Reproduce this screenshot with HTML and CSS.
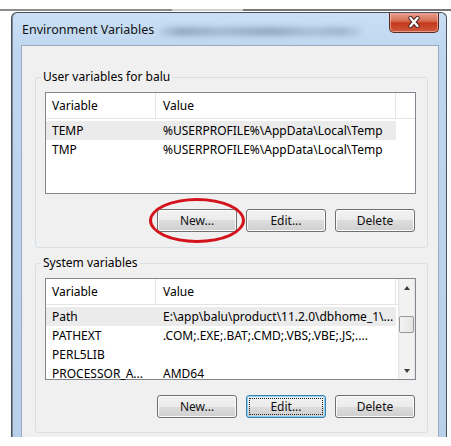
FILE: index.html
```html
<!DOCTYPE html>
<html lang="en">
<head>
    <meta charset="UTF-8">
    <title>Environment Variables</title>
    <link rel="stylesheet" href="styles.css">
</head>
<body>
    <div class="backdrop"></div>
    <div class="window">
        <div class="titlebar">
            <span class="title">Environment Variables</span>
            <button class="close" aria-label="Close">
                <svg width="16" height="12" viewBox="0 0 16 12">
                    <path d="M4.5 2 L11.5 10 M11.5 2 L4.5 10" stroke="#4a2018" stroke-width="4.2" stroke-linecap="round"/>
                    <path d="M4.5 2 L11.5 10 M11.5 2 L4.5 10" stroke="#ffffff" stroke-width="2.4" stroke-linecap="round"/>
                </svg>
            </button>
        </div>
        <div class="client">
            <fieldset class="group">
                <legend>User variables for balu</legend>
                <div class="list">
                    <div class="list-main">
                        <div class="list-head">
                            <div class="col-var">Variable</div>
                            <div class="col-val">Value</div>
                            <div class="col-fill"></div>
                        </div>
                        <div class="list-body">
                            <div class="row sel"><div class="col-var">TEMP</div><div class="col-val">%USERPROFILE%\AppData\Local\Temp</div></div>
                            <div class="row"><div class="col-var">TMP</div><div class="col-val">%USERPROFILE%\AppData\Local\Temp</div></div>
                        </div>
                    </div>
                </div>
                <div class="buttons">
                    <button class="btn marked">New...</button>
                    <button class="btn">Edit...</button>
                    <button class="btn">Delete</button>
                </div>
            </fieldset>
            <fieldset class="group group-sys">
                <legend>System variables</legend>
                <div class="list">
                    <div class="list-main">
                        <div class="list-head">
                            <div class="col-var">Variable</div>
                            <div class="col-val">Value</div>
                        </div>
                        <div class="list-body">
                            <div class="row sel"><div class="col-var">Path</div><div class="col-val">E:\app\balu\product\11.2.0\dbhome_1\...</div></div>
                            <div class="row"><div class="col-var">PATHEXT</div><div class="col-val">.COM;.EXE;.BAT;.CMD;.VBS;.VBE;.JS;....</div></div>
                            <div class="row"><div class="col-var">PERL5LIB</div><div class="col-val"></div></div>
                            <div class="row"><div class="col-var">PROCESSOR_A...</div><div class="col-val">AMD64</div></div>
                        </div>
                    </div>
                    <div class="scrollbar">
                        <div class="sb-btn"><span class="arrow-up"></span></div>
                        <div class="sb-track"><div class="sb-thumb"></div></div>
                        <div class="sb-btn"><span class="arrow-down"></span></div>
                    </div>
                </div>
                <div class="buttons">
                    <button class="btn">New...</button>
                    <button class="btn focus">Edit...</button>
                    <button class="btn">Delete</button>
                </div>
            </fieldset>
        </div>
    </div>
</body>
</html>
```
FILE: styles.css
```css
body {
    margin: 0;
    width: 451px;
    height: 446px;
    overflow: hidden;
    background-color: #ffffff;
    font-family: "Noto Sans", "Open Sans", sans-serif;
    font-size: 12px;
    color: #000000;
}
.backdrop {
    height: 12px;
    background: linear-gradient(90deg, #8c8c8c 0 172px, #cfcfcf 172px 243px, #777777 243px) 0 9px / 100% 2px no-repeat;
}
.window {
    box-sizing: border-box;
    width: 436px;
    height: 425px;
    margin-left: 11px;
    padding: 0 7px 0 9px;
    border: 1px solid #46505c;
    border-bottom: none;
    border-radius: 6px 6px 0 0;
    background: linear-gradient(#cadff5, #bed6ef 40px, #b8d0ea);
    box-shadow: inset 1px 0 0 #7d8a99;
    display: flex;
    flex-direction: column;
    overflow: hidden;
}
.titlebar {
    position: relative;
    height: 32px;
    display: flex;
    align-items: flex-start;
}
.titlebar::after {
    content: "";
    position: absolute;
    left: 140px;
    top: 15px;
    width: 200px;
    height: 7px;
    background: linear-gradient(90deg, rgba(60, 80, 110, 0.15), rgba(60, 80, 110, 0.45) 10%, rgba(60, 80, 110, 0.3) 30%, rgba(60, 80, 110, 0.45) 55%, rgba(60, 80, 110, 0.25) 75%, rgba(60, 80, 110, 0.35) 90%, rgba(60, 80, 110, 0.1));
    filter: blur(3px);
}
.title {
    margin: 9px 0 0 1px;
    font-size: 12.5px;
    line-height: 16px;
    color: #111111;
}
.close {
    margin: -1px 0 0 auto;
    width: 50px;
    height: 21px;
    padding: 0;
    border: 1px solid #5a2a22;
    border-top: none;
    border-radius: 0 0 5px 5px;
    background: linear-gradient(#e9a898, #d86d55 45%, #c3391c 55%, #cf5a3d);
    box-shadow: inset 0 0 0 1px rgba(255, 220, 210, 0.5);
    display: flex;
    align-items: center;
    justify-content: center;
}
.client {
    flex: 1;
    background-color: #f0f0f0;
    border: 1px solid #98abc0;
    border-bottom: none;
}
.group {
    margin: 23px 10px 0 13px;
    padding: 7px 11px 15px 9px;
    border: 1px solid #d5dfe5;
    border-radius: 3px;
    min-width: 0;
}
.group-sys {
    margin-top: 7px;
    padding-bottom: 14px;
}
legend {
    margin-left: -4px;
    padding: 0 2px;
    line-height: 16px;
}
.list {
    box-sizing: border-box;
    height: 102px;
    border: 1px solid #828790;
    background-color: #ffffff;
    display: flex;
}
.list-main {
    flex: 1;
    min-width: 0;
}
.list-head {
    box-sizing: border-box;
    height: 26px;
    display: flex;
    border-bottom: 1px solid #e5e5e5;
    line-height: 25px;
}
.col-var {
    box-sizing: border-box;
    width: 110px;
    padding-left: 6px;
    white-space: nowrap;
}
.col-val {
    box-sizing: border-box;
    width: 240px;
    padding-left: 7px;
    white-space: nowrap;
}
.list-head .col-var,
.list-head .col-val {
    border-right: 1px solid #e5e5e5;
}
.col-fill {
    flex: 1;
}
.list-body {
    padding-top: 2px;
}
.row {
    display: flex;
    width: 350px;
    height: 19px;
    line-height: 19px;
}
.row.sel {
    background-color: #ebebeb;
}
.scrollbar {
    width: 17px;
    display: flex;
    flex-direction: column;
    background: linear-gradient(90deg, #e2e2e2, #f2f2f2 2px, #f2f2f2 15px, #e2e2e2);
}
.sb-btn {
    height: 17px;
    display: flex;
    align-items: center;
    justify-content: center;
}
.arrow-up {
    border-left: 3.5px solid transparent;
    border-right: 3.5px solid transparent;
    border-bottom: 4px solid #3c3c3c;
}
.arrow-down {
    border-left: 3.5px solid transparent;
    border-right: 3.5px solid transparent;
    border-top: 4px solid #3c3c3c;
}
.sb-track {
    flex: 1;
    padding-top: 20px;
}
.sb-thumb {
    box-sizing: border-box;
    height: 17px;
    margin: 0 1px;
    border: 1px solid #999999;
    border-radius: 2px;
    background: linear-gradient(90deg, #f4f4f4, #e4e4e4);
}
.buttons {
    margin-top: 15px;
    padding-right: 1px;
    display: flex;
    justify-content: flex-end;
    gap: 9px;
}
.btn {
    position: relative;
    box-sizing: border-box;
    width: 80px;
    height: 23px;
    padding: 0;
    border: 1px solid #707070;
    border-radius: 3px;
    background: linear-gradient(#f2f2f2, #ebebeb 50%, #dddddd 50%, #cfcfcf);
    box-shadow: inset 0 0 0 1px #fbfbfb;
    font-family: "Noto Sans", "Open Sans", sans-serif;
    font-size: 12px;
    color: #111111;
}
.btn.focus {
    border-color: #3c7fb1;
    box-shadow: inset 0 0 0 1px #8ed3f2;
    outline: 1px dotted #222222;
    outline-offset: -4px;
}
.btn.marked::after {
    content: "";
    position: absolute;
    left: -9px;
    top: -12px;
    width: 96px;
    height: 45px;
    box-sizing: border-box;
    border: 3px solid #d4141d;
    border-radius: 50%;
}
```
